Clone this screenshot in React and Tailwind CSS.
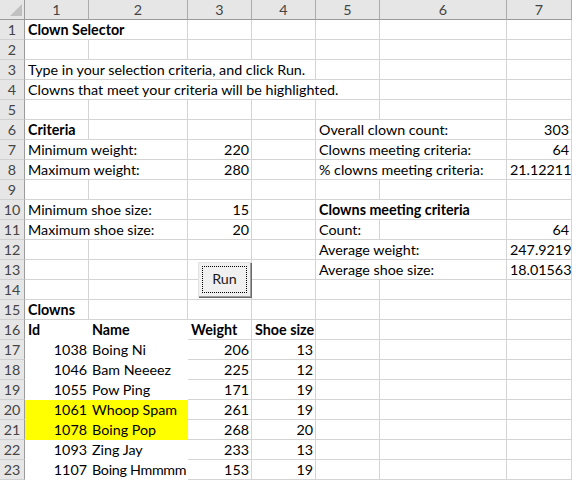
import React from "react";

const SPAN = { 1: "col-span-1", 2: "col-span-2", 3: "col-span-3", 4: "col-span-4", 5: "col-span-5" };

const E = (n = 1) => Array.from({ length: n }, () => ({}));

const clowns = [
  ["1038", "Boing Ni", "206", "13", false],
  ["1046", "Bam Neeeez", "225", "12", false],
  ["1055", "Pow Ping", "171", "19", false],
  ["1061", "Whoop Spam", "261", "19", true],
  ["1078", "Boing Pop", "268", "20", true],
  ["1093", "Zing Jay", "233", "13", false],
  ["1107", "Boing Hmmmm", "153", "19", false],
];

const rows = [
  [{ t: "Clown Selector", b: true, s: 2 }, ...E(5)],
  E(7),
  [{ t: "Type in your selection criteria, and click Run.", s: 4 }, ...E(3)],
  [{ t: "Clowns that meet your criteria will be highlighted.", s: 5 }, ...E(2)],
  E(7),
  [{ t: "Criteria", b: true }, ...E(3), { t: "Overall clown count:", s: 2 }, { t: "303", r: true }],
  [{ t: "Minimum weight:", s: 2 }, { t: "220", r: true }, {}, { t: "Clowns meeting criteria:", s: 2 }, { t: "64", r: true }],
  [{ t: "Maximum weight:", s: 2 }, { t: "280", r: true }, {}, { t: "% clowns meeting criteria:", s: 2 }, { t: "21.12211", r: true }],
  E(7),
  [{ t: "Minimum shoe size:", s: 2 }, { t: "15", r: true }, {}, { t: "Clowns meeting criteria", b: true, s: 2 }, {}],
  [{ t: "Maximum shoe size:", s: 2 }, { t: "20", r: true }, {}, { t: "Count:" }, {}, { t: "64", r: true }],
  [...E(4), { t: "Average weight:", s: 2 }, { t: "247.9219", r: true }],
  [...E(4), { t: "Average shoe size:", s: 2 }, { t: "18.01563", r: true }],
  E(7),
  [{ t: "Clowns", b: true }, ...E(6)],
  [{ t: "Id", b: true, nb: true }, { t: "Name", b: true, nb: true }, { t: "Weight", b: true }, { t: "Shoe size", b: true }, ...E(3)],
  ...clowns.map(([id, name, w, s, hl]) => [
    { t: id, r: true, nb: true, y: hl },
    { t: name, nb: true, y: hl, tight: name.length > 10 },
    { t: w, r: true },
    { t: s, r: true },
    ...E(3),
  ]),
];

function Cell({ c }) {
  const span = SPAN[c.s || 1];
  const border = c.nb ? "" : "border-r border-b border-[#d4d4d4]";
  const bg = c.y ? "bg-[#ffff00]" : "bg-white";
  const lh = c.nb ? "leading-[20px] pb-[1px]" : "leading-[19px]";
  return (
    <div
      className={`${span} ${border} ${bg} ${lh} h-5 px-[3px] whitespace-nowrap overflow-visible text-black ${
        c.r ? "text-right pr-[2px]" : "text-left"
      } ${c.b ? "font-bold" : "font-normal"} ${c.tight ? "tracking-[-0.3px]" : ""}`}
    >
      {c.t || ""}
    </div>
  );
}

function RunButton() {
  return (
    <div className="absolute left-[198px] top-[262px] w-[53px] h-[35px] bg-[#f0f0f0] border-t border-l border-[#e3e3e3] shadow-[inset_-1px_-1px_0_#a0a0a0,1px_1px_0_#696969] flex">
      <div className="m-[3px] mr-[4px] mb-[4px] flex-1 border border-dotted border-black flex items-center justify-center text-[#1a1a1a] leading-none">
        Run
      </div>
    </div>
  );
}

export default function App() {
  return (
    <div
      className="relative w-[572px] h-[480px] overflow-hidden bg-white text-[14.3px]"
      style={{ fontFamily: "Lato, 'Noto Sans', sans-serif" }}
    >
      <div className="grid grid-cols-[25px_64px_99px_64px_64px_64px_127px_65px]">
        <div className="h-5 bg-[#e6e6e6] border-r border-b border-[#9b9b9b] relative">
          <svg className="absolute right-[2px] bottom-[3px]" width="12" height="12" viewBox="0 0 12 12">
            <polygon points="12,0 12,12 0,12" fill="#c0c0c0" />
          </svg>
        </div>
        {[1, 2, 3, 4, 5, 6, 7].map((n) => (
          <div
            key={n}
            className="h-5 bg-[#e6e6e6] border-r border-b border-r-[#ababab] border-b-[#9b9b9b] text-center leading-[19px] text-[#444]"
          >
            {n}
          </div>
        ))}
        {rows.map((row, i) => (
          <React.Fragment key={i}>
            <div className="h-5 bg-[#e6e6e6] border-r border-b border-r-[#9b9b9b] border-b-[#d0d0d0] text-center leading-[19px] text-[#444]">
              {i + 1}
            </div>
            {row.map((c, j) => (
              <Cell key={j} c={c} />
            ))}
          </React.Fragment>
        ))}
      </div>
      <RunButton />
    </div>
  );
}
